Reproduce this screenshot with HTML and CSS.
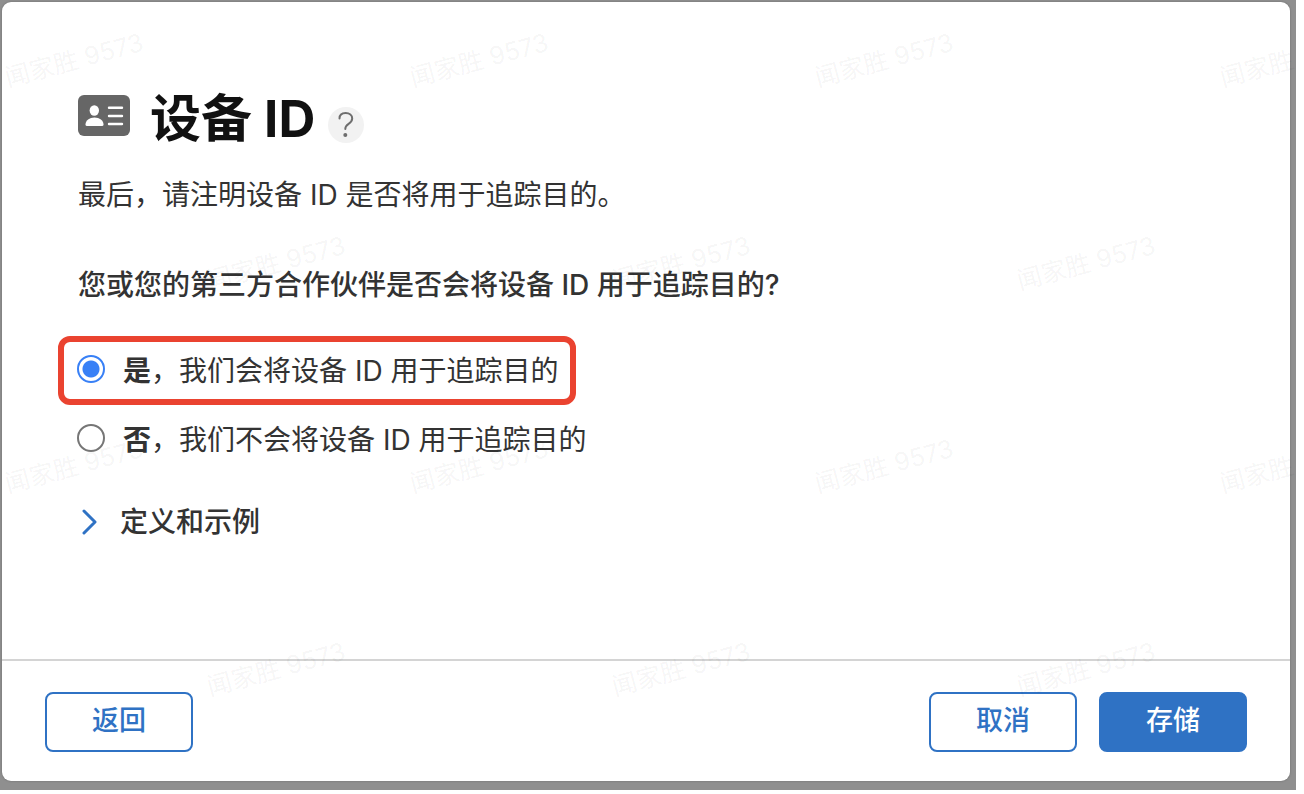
FILE: index.html
```html
<!DOCTYPE html>
<html lang="zh-CN">
<head>
<meta charset="utf-8">
<meta name="viewport" content="width=device-width, initial-scale=1">
<title>设备 ID</title>
<link rel="stylesheet" href="styles.css">
</head>
<body>
<div class="backdrop">
  <main class="dialog">
    <form class="form">
      <div class="content">
        <header class="heading">
          <svg class="card-icon" viewBox="0 0 52 41" aria-hidden="true">
            <rect width="52" height="41" rx="6" fill="#666"/>
            <ellipse cx="16.300" cy="15.500" rx="4.700" ry="5.200" fill="#fff"/>
            <path d="M7.500 29.500C7.500 25.500 11.500 22.500 16.500 22.500S25.500 25.500 25.500 29.500Q25.500 31 24 31H9Q7.500 31 7.500 29.500Z" fill="#fff"/>
            <path d="M31 12.800H44M31 21H44M31 29H44" stroke="#fff" stroke-width="2.400" stroke-linecap="round"/>
          </svg>
          <h1 class="title">设备 ID</h1>
          <button class="help" type="button" aria-label="帮助">
            <svg class="help-icon" viewBox="0 0 36 36" aria-hidden="true">
              <path d="M11.500 11.500C11.500 8 14 6 17.600 6C21.500 6 24.200 8.200 24.200 11.500C24.200 14 22.800 15.400 20.600 16.800C18.300 18.300 17.300 19.600 17.300 22" fill="none" stroke="#6e6e6e" stroke-width="2" stroke-linecap="round"/>
              <circle cx="17.300" cy="28" r="2" fill="#6e6e6e"/>
            </svg>
          </button>
        </header>
        <p class="intro">最后，请注明设备 ID 是否将用于追踪目的。</p>
        <fieldset class="choices">
          <legend class="question">您或您的第三方合作伙伴是否会将设备 ID 用于追踪目的?</legend>
          <label class="choice choice-marked" for="track-yes">
            <input class="radio" type="radio" id="track-yes" name="track" checked>
            <span><strong>是</strong>，我们会将设备 ID 用于追踪目的</span>
          </label>
          <label class="choice" for="track-no">
            <input class="radio" type="radio" id="track-no" name="track">
            <span><strong>否</strong>，我们不会将设备 ID 用于追踪目的</span>
          </label>
        </fieldset>
        <button class="disclosure" type="button" aria-expanded="false">
          <svg class="chevron" viewBox="0 0 16 26" aria-hidden="true"><path d="M2 2L13 13L2 24" fill="none" stroke="#2f72c4" stroke-width="3" stroke-linecap="round" stroke-linejoin="round"/></svg>
          <span>定义和示例</span>
        </button>
      </div>
      <footer class="actions">
        <button class="btn" type="button">返回</button>
        <button class="btn btn-cancel" type="button">取消</button>
        <button class="btn btn-primary" type="submit">存储</button>
      </footer>
    </form>
  </main>
  <div class="watermarks" aria-hidden="true">
    <div class="mark-row"><span class="mark">闻家胜 9573</span><span class="mark">闻家胜 9573</span><span class="mark">闻家胜 9573</span><span class="mark">闻家胜 9573</span></div>
    <div class="mark-row mark-row-shifted"><span class="mark">闻家胜 9573</span><span class="mark">闻家胜 9573</span><span class="mark">闻家胜 9573</span></div>
    <div class="mark-row"><span class="mark">闻家胜 9573</span><span class="mark">闻家胜 9573</span><span class="mark">闻家胜 9573</span><span class="mark">闻家胜 9573</span></div>
    <div class="mark-row mark-row-shifted"><span class="mark">闻家胜 9573</span><span class="mark">闻家胜 9573</span><span class="mark">闻家胜 9573</span></div>
  </div>
</div>
</body>
</html>
```
FILE: styles.css
```css
* { box-sizing: border-box; }
body {
  margin: 0;
  background: #fff;
  color: #333;
  font: 28px/40px Inter, "Noto Sans CJK SC", sans-serif;
}
button { font: inherit; color: inherit; cursor: pointer; }
.backdrop {
  position: relative;
  display: flex;
  min-height: calc(100vh - 4px);
  margin: 0 8px 4px 0;
  padding: 2px 6px 9px 2px;
  background: #8f8f8f;
  overflow: hidden;
}
.dialog {
  display: flex;
  flex: 1;
  background: #fff;
  border-radius: 9px;
  box-shadow: 0 0 2px #666;
}
.form { display: flex; flex: 1; flex-direction: column; }
.content { flex: 1; padding: 85px 56px 44px; }
.heading { display: flex; align-items: center; margin-left: 20px; }
.card-icon { width: 52px; height: 41px; margin-bottom: 8px; }
.title {
  margin: 0 13px 0 20px;
  color: #111;
  font-size: 51px;
  line-height: 64px;
  font-weight: 700;
}
.help {
  width: 36px;
  height: 36px;
  margin-top: 12px;
  padding: 0;
  border: 0;
  border-radius: 50%;
  background: #f2f2f2;
}
.help-icon { display: block; }
.intro { margin: 24px 20px 0; }
.choices { margin: 50px 0 0; padding: 0; border: 0; }
.question { margin-bottom: 31px; padding: 0 20px; font-weight: 500; }
.choice {
  display: flex;
  align-items: center;
  gap: 18px;
  width: fit-content;
  height: 69px;
  padding: 0 11px 0 13px;
  border: 6px solid transparent;
  border-radius: 12px;
}
.choice-marked { border-color: #ea4330; }
.choice strong { font-weight: 700; }
.radio {
  appearance: none;
  width: 28px;
  height: 28px;
  margin: 0 0 4px;
  border: 2px solid #767676;
  border-radius: 50%;
  background: #fff;
}
.radio:checked {
  border-color: #3880f6;
  background: radial-gradient(circle, #3880f6 8px, #fff 9px);
}
.disclosure {
  display: flex;
  align-items: center;
  gap: 22px;
  margin: 28px 0 0 24px;
  padding: 0;
  border: 0;
  background: none;
  font-weight: 500;
}
.chevron { width: 16px; height: 26px; }
.actions {
  display: flex;
  gap: 22px;
  padding: 31px 43px 29px;
  border-top: 2px solid #d4d4d4;
}
.btn {
  width: 148px;
  height: 60px;
  padding: 0 0 2px;
  border: 2px solid #2f72c4;
  border-radius: 8px;
  background: #fff;
  color: #2f72c4;
  font-size: 27px;
  font-weight: 500;
}
.btn-cancel { margin-left: auto; }
.btn-primary { background: #2f72c4; color: #fff; }
.watermarks {
  position: absolute;
  inset: 0;
  padding-top: 40px;
  overflow: hidden;
  pointer-events: none;
}
.mark-row { display: flex; gap: 257px; height: 203px; }
.mark-row-shifted { padding-left: 202px; }
.mark {
  flex: none;
  width: 148px;
  height: 40px;
  color: rgba(0, 0, 0, 0.05);
  font-size: 25px;
  text-align: center;
  white-space: nowrap;
  transform: rotate(-15deg);
}
```
